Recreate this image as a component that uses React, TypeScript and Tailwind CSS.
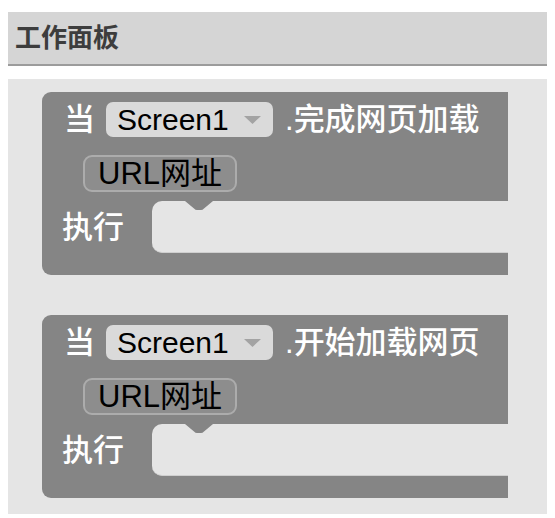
import React from "react";

const font = "font-['Liberation_Sans','Noto_Sans_CJK_SC',sans-serif]";

const EventBlock = ({ event }: { event: string }) => {
    return (
        <div className="w-[466px] bg-[#858585] rounded-l-[9px]">
            {/* header row: 当 [Screen1 ▾] .event */}
            <div className="flex items-center h-[45px] pt-[10px] pl-[22px]">
                <span className="text-white text-[31px] font-medium leading-none">当</span>
                <div className="ml-[11px] flex items-center h-[35px] w-[167px] rounded-[7px] bg-[#dadada] pl-[11px]">
                    <span className="text-black text-[30px] leading-none">Screen1</span>
                    <svg width="17" height="8" viewBox="0 0 17 8" className="ml-auto mr-[12px]">
                        <polygon points="0,0 17,0 8.5,8" fill="#a3a3a3" />
                    </svg>
                </div>
                <span className="ml-[12px] text-white text-[31px] font-medium leading-none">.{event}</span>
            </div>
            {/* parameter */}
            <div className="pl-[41px] pt-[18px] pb-[9px]">
                <div className="inline-flex items-center h-[37px] px-[13px] rounded-[9px] bg-[#8d8d8d] border-2 border-[#acacac]">
                    <span className="text-black text-[31px] leading-none">URL网址</span>
                </div>
            </div>
            {/* do slot */}
            <div className="flex h-[52px]">
                <div className="w-[110px] flex items-center pl-[20px]">
                    <span className="text-white text-[31px] font-medium leading-none">执行</span>
                </div>
                <div className="relative flex-1 bg-[#e5e5e5] rounded-l-[10px] border-b border-[#cfcfcf]">
                    <svg width="28" height="10" viewBox="0 0 28 10" className="absolute left-[33px] top-0">
                        <path d="M0 0 L9 7.5 Q10.5 9 12 9 L16 9 Q17.5 9 19 7.5 L28 0 Z" fill="#858585" />
                    </svg>
                </div>
            </div>
            <div className="h-[22px]" />
        </div>
    );
};

const App = () => {
    return (
        <div className={`w-[555px] h-[518px] bg-white pt-[12px] px-[8px] ${font}`}>
            <div className="h-[54px] bg-[#d5d5d5] border-b-2 border-[#9c9c9c] flex items-center pl-[7px]">
                <span className="text-[26px] font-bold text-[#3d3d3d] leading-none">工作面板</span>
            </div>
            <div className="mt-[13px] h-[435px] bg-[#e5e5e5] pt-[13px] pl-[34px] flex flex-col gap-[40px]">
                <EventBlock event="完成网页加载" />
                <EventBlock event="开始加载网页" />
            </div>
        </div>
    );
};

export default App;
